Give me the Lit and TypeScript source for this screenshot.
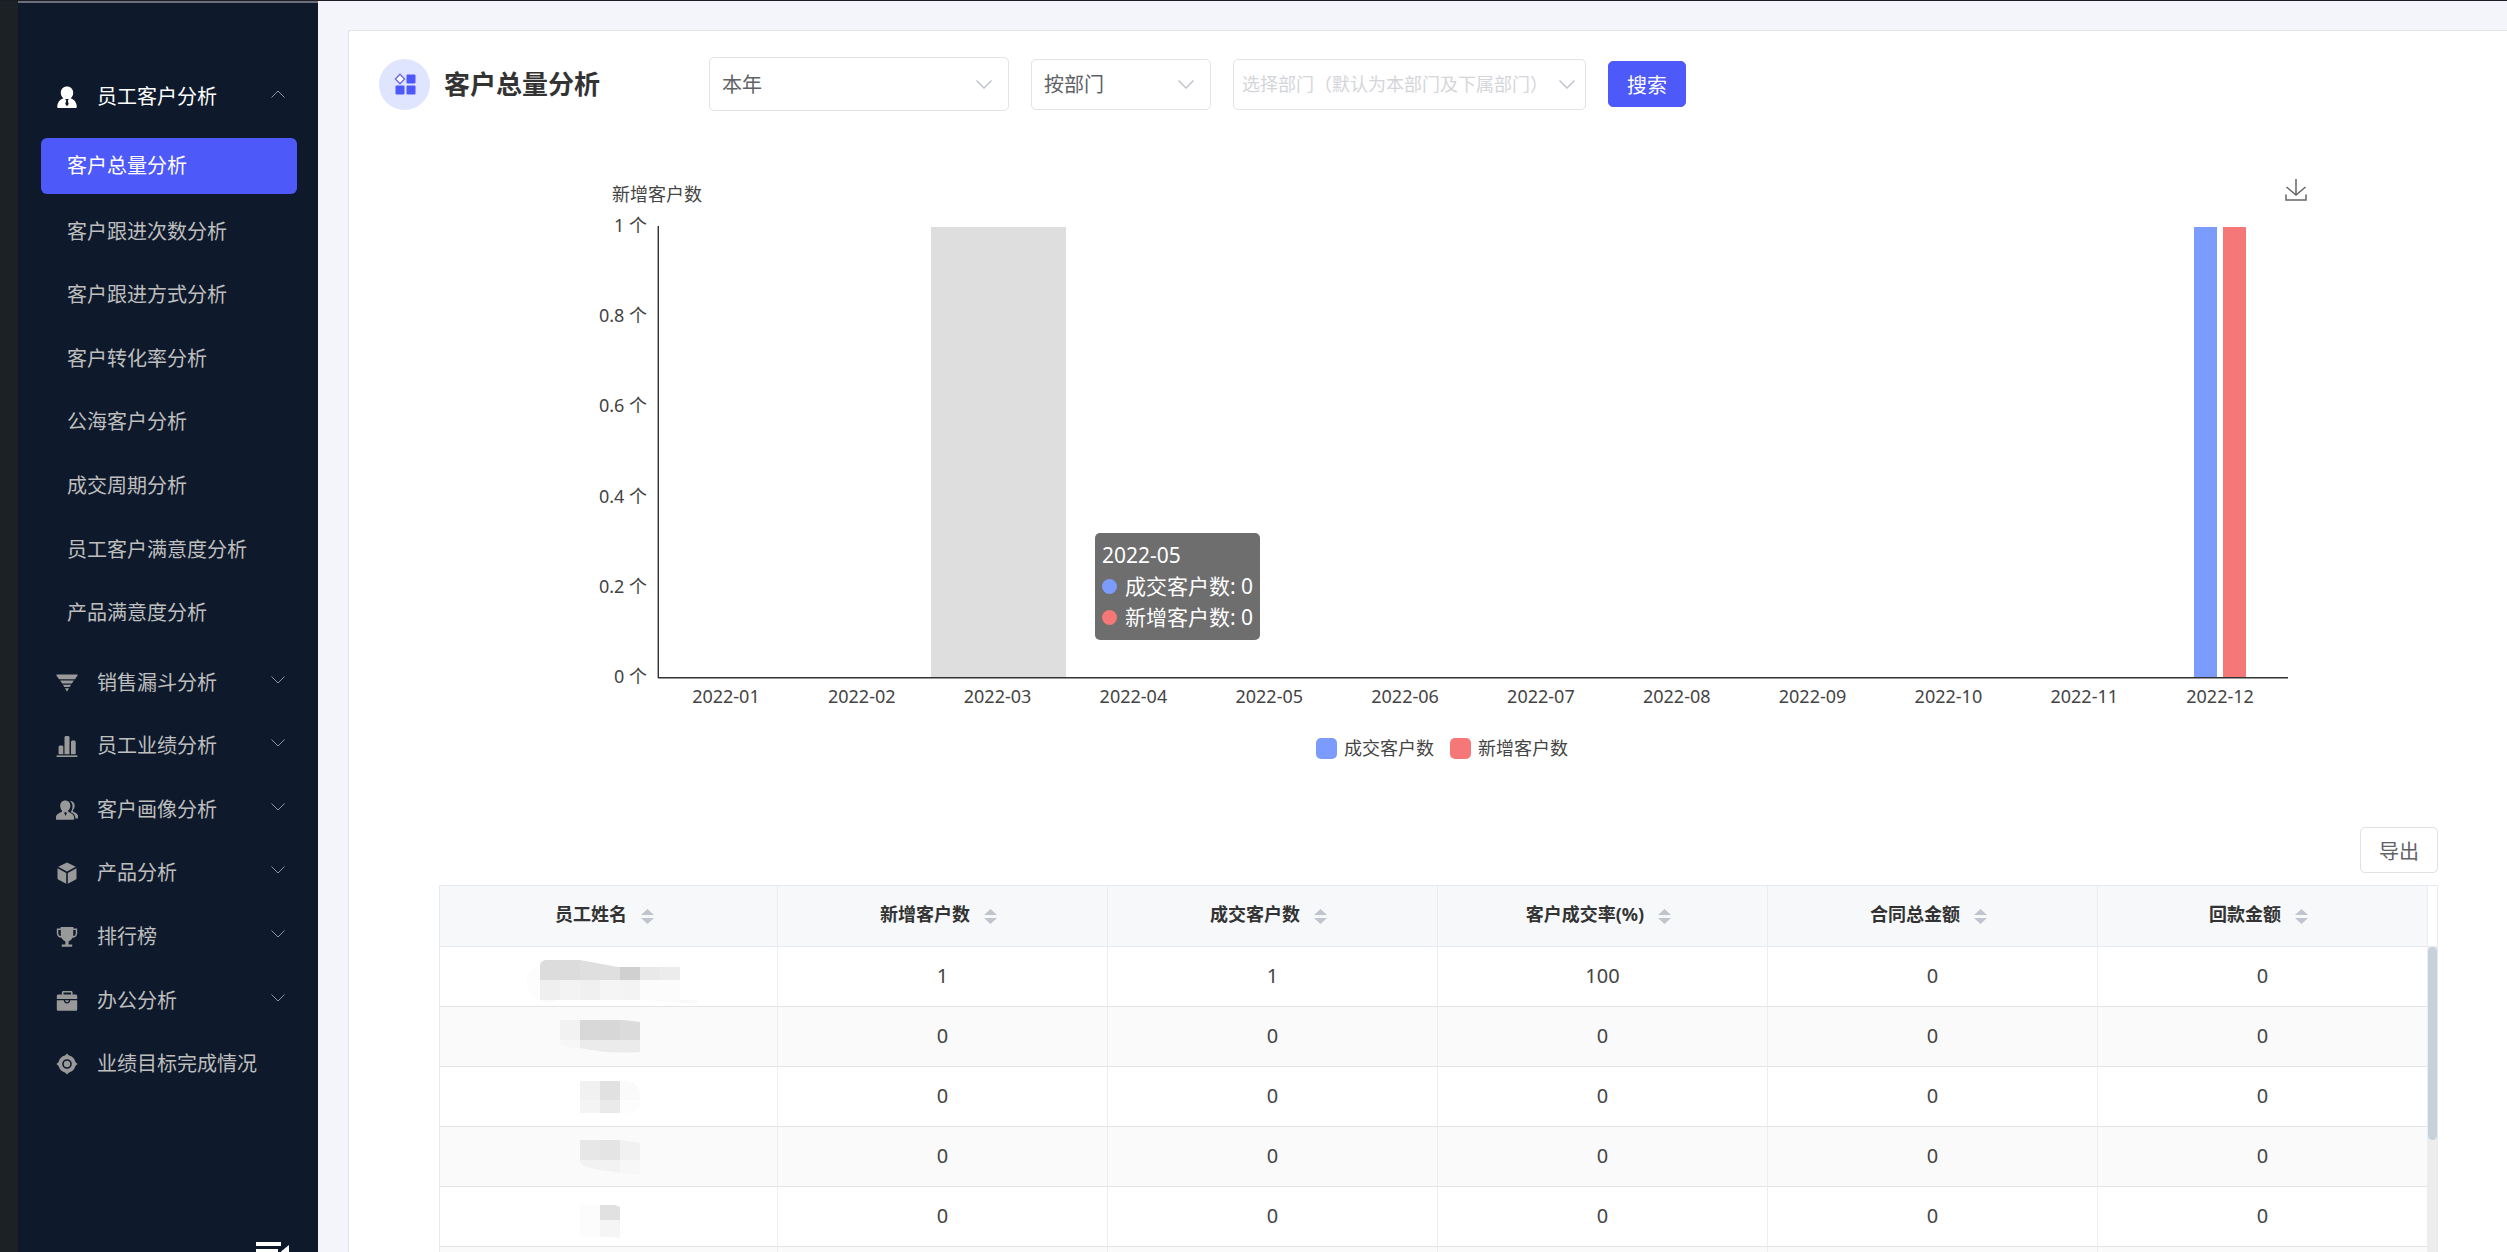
import { LitElement, html, svg, css, nothing } from "lit";
import { customElement, property, state } from "lit/decorators.js";
import { classMap } from "lit/directives/class-map.js";

const icons: Record<string, unknown> = {
  person: svg`<path d="M11 0.5c3.600 0 6.200 2.700 6.200 6.300 0 2.300-1 4.300-2.600 5.400 3.700 1.300 6 4.200 6.200 8.300 0 1.200-.5 1.700-1.600 1.700H2.800c-1.100 0-1.600-.5-1.600-1.700 .2-4.100 2.500-7 6.200-8.300C5.800 11.100 4.800 9.100 4.800 6.800 4.800 3.200 7.400.5 11 .5z"/><path class="cut" d="M9.200 13h3.600l-1 1.700.9 3.300L11 20.200 9.300 18l.9-3.300z"/>`,
  funnel: svg`<path d="M.5 2.400h21v1.400l-2.600 3.400H3.100L.5 3.800zM4.200 8.400h13.600l-1.900 3.200H6.100zM6.900 12.800h8.200l-1.400 2.300H8.300zM9 16.300h4L11 19.800z"/>`,
  bars: svg`<path d="M2.600 11.500l1-1h2.700l1 1v7.700H2.600zM8.500 2l1-1h3l1 1v17.200h-5zM15 6.500l1-1h2.700l1 1v12.700H15z"/><path d="M.6 20.400h20.800v1.600H.6z"/>`,
  people: svg`<path d="M9.300 1.500c3 0 5 2.200 5 5.200 0 2-.8 3.800-2.100 4.900v1.200c2 1 4.800 2 5.600 4.200.3 1 .4 2 .4 2.700 0 .7-.4 1-1 1H.8c-.6 0-1-.3-1-1 0-.7.1-1.700.4-2.700.8-2.200 3.600-3.200 5.800-4.200v-1.200C4.900 10.500 4.200 8.700 4.200 6.700c0-3 2.100-5.200 5.100-5.200z"/><path d="M13.800 2c2.800-.1 4.900 1.900 4.900 4.700 0 1.800-.7 3.300-1.800 4.300v1.500c2 .9 4.200 1.800 5 3.900.3 1 .4 1.500.4 2.200 0 .6-.3.900-.9.900h-1.900c-.3-3.600-2.200-5.100-5-6.400 1.400-1.600 2-3.700 2-6.200 0-1.900-.9-3.700-2.700-4.900z"/><path class="cut" d="M8.200 14l1.300-1.200 1.300 1.200-1.100 3z"/>`,
  cube: svg`<path d="M11 .5l8.800 4.300L11 9.500 2.200 4.800zM1.500 6.200l8.700 4.700V21.800l-8-4.300c-.5-.3-.7-.6-.7-1.200zM20.500 6.200l-8.700 4.700V21.800l8-4.300c.5-.3.7-.6.700-1.200z"/>`,
  trophy: svg`<path fill-rule="evenodd" d="M4.600 1h12.800v1.600h3.800v4.600c0 2.800-1.900 4.300-4.700 4.600-.9 1.700-2.200 3-3.900 3.700v3h3.600v2.200H5.800v-2.200h3.600v-3c-1.700-.7-3-2-3.900-3.700C2.700 11.500.8 10 .8 7.200V2.600h3.800zM2.300 4v3.200c0 1.600.8 2.500 2.500 2.900V4zm17.400 0h-2.500v6.100c1.700-.4 2.500-1.300 2.500-2.900z"/>`,
  case: svg`<path fill-rule="evenodd" d="M7.500 1h7.500c1 0 1.600.6 1.600 1.600v2h3c1 0 1.600.6 1.600 1.600V9H.8V6.200c0-1 .6-1.600 1.600-1.600h3.500v-2C5.900 1.600 6.500 1 7.500 1zm0 1.600v2H15v-2z"/><path d="M.8 10.300h7c0 2 1.200 3.200 3.200 3.200s3.200-1.200 3.200-3.200h7v9c0 1-.5 1.500-1.500 1.500H2.300c-1 0-1.500-.5-1.500-1.500z"/><path d="M9.200 10.300h3.600c0 1.200-.7 1.900-1.800 1.900s-1.800-.7-1.800-1.900z"/>`,
  target: svg`<path fill-rule="evenodd" d="M11 .5l2 2.100c3.300.8 5.600 3.100 6.400 6.400l2.100 2-2.100 2c-.8 3.300-3.100 5.600-6.400 6.400l-2 2.100-2-2.100C5.700 18.600 3.400 16.300 2.600 13L.5 11l2.100-2C3.400 5.700 5.700 3.400 9 2.600zM11 6.200a4.800 4.800 0 100 9.600 4.800 4.800 0 000-9.600z"/><circle cx="11" cy="11" r="3.200"/>`,
};

const subItems = [
  "客户跟进次数分析",
  "客户跟进方式分析",
  "客户转化率分析",
  "公海客户分析",
  "成交周期分析",
  "员工客户满意度分析",
  "产品满意度分析",
];

const groups = [
  { icon: "funnel", label: "销售漏斗分析", open: true },
  { icon: "bars", label: "员工业绩分析", open: true },
  { icon: "people", label: "客户画像分析", open: true },
  { icon: "cube", label: "产品分析", open: true },
  { icon: "trophy", label: "排行榜", open: true },
  { icon: "case", label: "办公分析", open: true },
  { icon: "target", label: "业绩目标完成情况", open: false },
];

@customElement("side-menu")
class SideMenu extends LitElement {
  static styles = css`
    :host {
      display: flex;
      flex-direction: column;
      box-sizing: border-box;
      width: 300px;
      height: 100%;
      background: #0e1a2c;
      border-top: 2px solid #6a6f79;
      padding-top: 62px;
      color: #bebebe;
    }
    a,
    button {
      font: inherit;
      color: inherit;
      text-decoration: none;
      background: none;
      border: 0;
      padding: 0;
      text-align: left;
      white-space: nowrap;
      cursor: pointer;
    }
    .group {
      display: grid;
      grid-template-columns: 22px minmax(0, 1fr) 14px;
      column-gap: 19px;
      align-items: center;
      width: 100%;
      box-sizing: border-box;
      padding: 0 33px 0 38px;
      font-size: 20px;
      line-height: 28px;
    }
    .group.current {
      height: 64px;
      color: #fff;
      margin-bottom: 9px;
      flex: none;
    }
    .icon {
      width: 22px;
      height: 22px;
      fill: #999;
    }
    .current .icon {
      fill: #fff;
    }
    .cut {
      fill: #0e1a2c;
    }
    .chevron {
      width: 14px;
      height: 8px;
      fill: none;
      stroke: #909399;
      margin-bottom: 6px;
    }
    .sub {
      display: flex;
      align-items: center;
      padding-left: 49px;
      font-size: 20px;
      line-height: 28px;
    }
    .sub.active {
      flex: none;
      height: 56px;
      margin: 0 21px 6px 23px;
      padding-left: 26px;
      border-radius: 6px;
      background: #4e59f9;
      color: #fff;
    }
    .list {
      display: grid;
      grid-template-columns: minmax(0, 1fr);
      grid-auto-rows: 1fr;
      height: 445px;
      flex: none;
      margin-bottom: 6px;
    }
    .fold {
      margin: auto 29px 0 auto;
      width: 33px;
      height: 10px;
      flex: none;
      overflow: hidden;
    }
    .fold svg {
      display: block;
      width: 33px;
      height: 24px;
      fill: #fff;
    }
  `;

  private icon(name: string) {
    return html`<svg class="icon" viewBox="0 0 22 22" aria-hidden="true">${icons[name]}</svg>`;
  }

  render() {
    return html`
      <button class="group current" aria-expanded="true">
        ${this.icon("person")}<span>员工客户分析</span>
        <svg class="chevron" viewBox="0 0 14 8"><path d="M.5 7.500L7 1l6.500 6.500" /></svg>
      </button>
      <a class="sub active" href="#total">客户总量分析</a>
      <div class="list">
        ${subItems.map((t) => html`<a class="sub" href="#sub">${t}</a>`)}
      </div>
      <div class="list">
        ${groups.map(
          (g) => html`<button class="group">
            ${this.icon(g.icon)}<span>${g.label}</span>
            ${g.open
              ? html`<svg class="chevron" viewBox="0 0 14 8"><path d="M.5 .5L7 7 13.500 .5" /></svg>`
              : nothing}
          </button>`
        )}
      </div>
      <button class="fold" aria-label="收起菜单">
        <svg viewBox="0 0 33 24">
          <path d="M0 0h25v4H0zM0 7h22v4H0zM0 14h25v4H0zM33 3v13l-8-6.500z" />
        </svg>
      </button>
    `;
  }
}

const months = Array.from({ length: 12 }, (_, i) => `2022-${String(i + 1).padStart(2, "0")}`);
const deals = months.map((_, i) => (i === 11 ? 1 : 0));
const added = months.map((_, i) => (i === 11 ? 1 : 0));

@customElement("customer-chart")
class CustomerChart extends LitElement {
  @property({ type: Number }) hovered = 2;

  static styles = css`
    :host {
      display: block;
      font-size: 18px;
      line-height: 20px;
      color: #444;
    }
    .top {
      display: flex;
      justify-content: space-between;
      align-items: flex-start;
      padding-left: 15px;
      line-height: 32px;
      height: 32px;
      margin-bottom: 6px;
    }
    .download {
      border: 0;
      background: none;
      padding: 1px 0 0;
      line-height: 0;
      cursor: pointer;
    }
    .download svg {
      width: 22px;
      height: 24px;
      fill: none;
      stroke: #666;
      stroke-width: 1.500;
    }
    .body {
      display: grid;
      grid-template-columns: 50px 1fr;
      column-gap: 11px;
      padding-right: 19px;
    }
    .ticks {
      display: flex;
      flex-direction: column;
      justify-content: space-between;
      text-align: right;
      height: 471px;
      margin-top: -1px;
      white-space: nowrap;
    }
    .plot {
      position: relative;
      display: grid;
      grid-template-columns: repeat(12, 1fr);
      margin: 10px 0 8px;
      border-left: 1px solid #333;
      border-bottom: 1px solid #333;
      box-shadow: -1px 0 #aaa, 0 1px #999;
      padding-top: 1px;
    }
    .slot {
      display: flex;
      justify-content: center;
      align-items: flex-end;
      gap: 6px;
    }
    .slot.hovered {
      background: #dedede;
    }
    .bar {
      width: 23px;
    }
    .deal {
      background: #7b9cfc;
    }
    .new {
      background: #f57777;
    }
    .months {
      grid-column: 2;
      display: grid;
      grid-template-columns: repeat(12, 1fr);
      text-align: center;
    }
    .tip {
      position: absolute;
      left: 436px;
      top: 307px;
      box-sizing: border-box;
      padding: 7px;
      border-radius: 5px;
      background: rgba(80, 80, 80, 0.83);
      color: #fff;
      font-size: 21px;
      line-height: 31px;
      white-space: nowrap;
    }
    .tip-row {
      display: flex;
      align-items: center;
      gap: 8px;
    }
    .dot {
      width: 15px;
      height: 15px;
      border-radius: 50%;
    }
    .legend {
      display: flex;
      justify-content: center;
      gap: 16px;
      padding-right: 20px;
      margin-top: 31px;
      line-height: 22px;
    }
    .key {
      display: flex;
      align-items: center;
      gap: 7px;
    }
    .swatch {
      width: 21px;
      height: 21px;
      border-radius: 5px;
    }
  `;

  render() {
    return html`
      <div class="top">
        <span>新增客户数</span>
        <button class="download" aria-label="保存为图片">
          <svg viewBox="0 0 22 24"><path d="M11 0v16M1.500 8l9.500 8 9.500-8M1 15.500v5.500h20v-5.500" /></svg>
        </button>
      </div>
      <div class="body">
        <div class="ticks">
          ${["1", "0.8", "0.6", "0.4", "0.2", "0"].map((t) => html`<span>${t} 个</span>`)}
        </div>
        <div class="plot">
          ${months.map(
            (_, i) => html`<div class=${classMap({ slot: true, hovered: i === this.hovered })}>
              ${deals[i] ? html`<div class="bar deal" style="height:${deals[i] * 100}%"></div>` : nothing}
              ${added[i] ? html`<div class="bar new" style="height:${added[i] * 100}%"></div>` : nothing}
            </div>`
          )}
          <div class="tip" role="tooltip">
            <div>2022-05</div>
            <div class="tip-row"><span class="dot deal"></span><span>成交客户数: 0</span></div>
            <div class="tip-row"><span class="dot new"></span><span>新增客户数: 0</span></div>
          </div>
        </div>
        <div class="months">${months.map((m) => html`<span>${m}</span>`)}</div>
      </div>
      <div class="legend">
        <span class="key"><span class="swatch deal"></span>成交客户数</span>
        <span class="key"><span class="swatch new"></span>新增客户数</span>
      </div>
    `;
  }
}

const columns = ["员工姓名", "新增客户数", "成交客户数", "客户成交率(%)", "合同总金额", "回款金额"];

// Mosaic blocks that hide each employee's name: [x, y, width, height, colour].
type Block = [number, number, number, number, string];
const masks: { path: string; blocks: Block[] }[] = [
  {
    path: "M8 33Q12 20 22 18Q23 13 29 13H62L100 20H162V53H190L180 57L130 53H40L30 56L22 53Q10 48 8 33z",
    blocks: [
      [8, 20, 14, 33, "#fdfdfd"],
      [22, 13, 40, 20, "#dcdcdc"],
      [62, 13, 40, 20, "#dfdfdf"],
      [102, 20, 20, 13, "#d0d0d0"],
      [122, 20, 20, 13, "#e9e9e9"],
      [142, 20, 20, 13, "#ececec"],
      [22, 33, 20, 20, "#efefef"],
      [42, 33, 20, 20, "#f3f3f3"],
      [62, 33, 20, 20, "#f0f0f0"],
      [82, 33, 20, 20, "#f5f5f5"],
      [102, 33, 20, 20, "#f3f3f3"],
      [122, 33, 40, 20, "#fcfcfc"],
      [22, 53, 168, 5, "#fafafa"],
    ],
  },
  {
    path: "M42 13H105L122 15V45Q90 47 62 41Q42 41 42 34z",
    blocks: [
      [42, 13, 20, 20, "#f2f2f2"],
      [62, 13, 20, 20, "#d8d8d8"],
      [82, 13, 20, 20, "#d7d7d7"],
      [102, 13, 20, 20, "#dbdbdb"],
      [42, 33, 20, 10, "#f7f7f7"],
      [62, 33, 60, 14, "#ebebeb"],
    ],
  },
  {
    path: "M62 14H108Q122 16 122 28V38Q120 46 112 46H62z",
    blocks: [
      [62, 14, 20, 19, "#f1f1f1"],
      [82, 14, 20, 19, "#e1e1e1"],
      [102, 14, 20, 19, "#fafafa"],
      [62, 33, 20, 13, "#f4f4f4"],
      [82, 33, 20, 13, "#eaeaea"],
      [102, 33, 20, 13, "#fdfdfd"],
    ],
  },
  {
    path: "M62 13H102L122 16V48L82 43Q62 40 62 34z",
    blocks: [
      [62, 13, 20, 20, "#e7e7e7"],
      [82, 13, 20, 20, "#e4e4e4"],
      [102, 13, 20, 20, "#f1f1f1"],
      [62, 33, 40, 14, "#f2f2f2"],
      [102, 33, 20, 15, "#f7f7f7"],
    ],
  },
  {
    path: "M62 18H97L102 20V51L92 50H62z",
    blocks: [
      [62, 18, 20, 32, "#fcfcfc"],
      [82, 18, 20, 15, "#e1e1e1"],
      [82, 33, 20, 18, "#f5f5f5"],
    ],
  },
  { path: "M0 0z", blocks: [] },
];

const rows = [
  ["1", "1", "100", "0", "0"],
  ["0", "0", "0", "0", "0"],
  ["0", "0", "0", "0", "0"],
  ["0", "0", "0", "0", "0"],
  ["0", "0", "0", "0", "0"],
  ["", "", "", "", ""],
];

@customElement("staff-table")
class StaffTable extends LitElement {
  static styles = css`
    :host {
      display: flex;
      border: 1px solid #e8eaf1;
    }
    table {
      flex: 1;
      table-layout: fixed;
      border-collapse: separate;
      border-spacing: 0;
      width: 100%;
      color: #444;
    }
    th,
    td {
      box-sizing: border-box;
      border-right: 1px solid #ebedf3;
      border-bottom: 1px solid #e3e4e6;
      padding: 0;
      height: 60px;
      text-align: center;
      font-size: 20px;
      line-height: 28px;
    }
    .value {
      padding-bottom: 2px;
    }
    .name-col {
      width: 17%;
    }
    th {
      height: 61px;
      border-bottom-color: #e8eaf1;
      background: #f6f8fa;
    }
    tbody tr:nth-child(even) td {
      background: #fafafa;
    }
    .sort {
      display: inline-flex;
      align-items: center;
      gap: 14px;
      border: 0;
      padding: 0 8px 4px 0;
      background: none;
      font: inherit;
      font-size: 18px;
      font-weight: 700;
      color: #333;
      cursor: pointer;
    }
    .arrows {
      width: 13px;
      height: 15px;
      fill: #c0c4cc;
      margin-top: 4px;
    }
    .mask {
      display: block;
      width: 180px;
      height: 59px;
      margin: 0 auto;
    }
    .gutter {
      display: flex;
      flex-direction: column;
      width: 9px;
      background: #ededed;
    }
    .corner {
      height: 60px;
      background: #fff;
      border-bottom: 1px solid #e8eaf1;
    }
    .thumb {
      height: 193px;
      border-radius: 5px;
      background: #c7d1da;
    }
  `;

  render() {
    return html`
      <table>
        <thead>
          <tr>
            ${columns.map(
              (c, i) => html`<th class=${classMap({ "name-col": i === 0 })} scope="col">
                <button class="sort">
                  ${c}<svg class="arrows" viewBox="0 0 13 15"><path d="M0 6l6.500-6L13 6zM0 9h13l-6.500 6z" /></svg>
                </button>
              </th>`
            )}
          </tr>
        </thead>
        <tbody>
          ${rows.map(
            (r, i) => html`<tr>
              <td>
                <svg class="mask" viewBox="0 0 180 59" role="img" aria-label="姓名已隐藏">
                  <clipPath id="m${i}"><path d=${masks[i].path} /></clipPath>
                  <g clip-path="url(#m${i})">
                    ${masks[i].blocks.map(
                      ([x, y, w, h, c]) => svg`<rect x=${x} y=${y} width=${w} height=${h} fill=${c} />`
                    )}
                  </g>
                </svg>
              </td>
              ${r.map((v) => html`<td class="value">${v}</td>`)}
            </tr>`
          )}
        </tbody>
      </table>
      <div class="gutter">
        <div class="corner"></div>
        <div class="thumb"></div>
      </div>
    `;
  }
}

@customElement("app-root")
class AppRoot extends LitElement {
  @state() private period = "本年";

  static styles = css`
    :host {
      display: block;
      font-family: "Noto Sans", "Noto Sans CJK SC", sans-serif;
      font-size: 20px;
      font-weight: 400;
    }
    .page {
      display: flex;
      box-sizing: border-box;
      height: 100vh;
      overflow: hidden;
      border-top: 1px solid #1b1c26;
      background: #f4f5fa;
    }
    .rail {
      flex: 0 0 18px;
      background: #1c2126;
    }
    side-menu {
      flex: none;
    }
    .main {
      flex: 1;
      min-width: 0;
      padding: 29px 0 0 30px;
    }
    .card {
      border: 1px solid #e3e4e7;
      border-right: 0;
      border-top-left-radius: 3px;
      background: #fff;
      padding: 26px 69px 0 0;
    }
    .head {
      display: flex;
      align-items: center;
      height: 54px;
      padding-left: 30px;
    }
    .badge {
      display: grid;
      place-items: center;
      width: 51px;
      height: 51px;
      border-radius: 50%;
      background: #e0e5ff;
    }
    .badge svg {
      width: 22px;
      height: 22px;
    }
    h1 {
      margin: 0 109px 0 14px;
      font-size: 26px;
      line-height: 36px;
      font-weight: 700;
      color: #333;
    }
    .pick {
      display: grid;
      align-items: center;
      margin-right: 22px;
      height: 51px;
      width: 180px;
    }
    .pick.period {
      width: 300px;
      height: 54px;
    }
    .pick.dept {
      width: 353px;
    }
    .pick select {
      grid-area: 1 / 1;
      appearance: none;
      width: 100%;
      height: 100%;
      border: 1px solid #e2e3e6;
      border-radius: 5px;
      background: #fff;
      padding: 0 40px 0 12px;
      font: inherit;
      font-size: 20px;
      color: #606266;
    }
    .pick.dept select {
      padding: 0 30px 0 8px;
      font-size: 18px;
      color: #d4d5d9;
    }
    .pick svg {
      grid-area: 1 / 1;
      justify-self: end;
      width: 16px;
      height: 9px;
      margin-right: 17px;
      fill: none;
      stroke: #c0c4cc;
      stroke-width: 1.500;
      pointer-events: none;
    }
    .pick.dept svg {
      margin-right: 11px;
    }
    .btn {
      box-sizing: border-box;
      width: 78px;
      height: 46px;
      padding: 0;
      border: 1px solid #e0e1e4;
      border-radius: 5px;
      background: #fff;
      font: inherit;
      font-size: 20px;
      color: #606266;
      cursor: pointer;
    }
    .btn.primary {
      border-color: #4e59f9;
      background: #4e59f9;
      color: #fff;
    }
    customer-chart {
      margin: 67px 131px 68px 248px;
    }
    .actions {
      display: flex;
      justify-content: flex-end;
      margin-bottom: 12px;
    }
    staff-table {
      margin-left: 90px;
    }
  `;

  private chevron() {
    return html`<svg viewBox="0 0 16 9" aria-hidden="true"><path d="M.5 .5L8 8 15.500 .5" /></svg>`;
  }

  render() {
    return html`
      <div class="page">
        <div class="rail"></div>
        <side-menu></side-menu>
        <main class="main">
          <section class="card">
            <header class="head">
              <span class="badge">
                <svg viewBox="0 0 22 22" fill="#4e59f9">
                  <path d="M6 1.200l4.600 4.800L6 10.800 1.400 6z" fill="#fff" stroke="#6a63f3" stroke-width="1.300" />
                  <rect x="12.500" y="1.500" width="9" height="9" rx="1" />
                  <rect x="1.500" y="12.500" width="9" height="9" rx="1" />
                  <rect x="12.500" y="12.500" width="9" height="9" rx="1" />
                </svg>
              </span>
              <h1>客户总量分析</h1>
              <label class="pick period">
                <select aria-label="时间范围"><option>${this.period}</option></select>${this.chevron()}
              </label>
              <label class="pick">
                <select aria-label="统计维度"><option>按部门</option></select>${this.chevron()}
              </label>
              <label class="pick dept">
                <select aria-label="选择部门"><option>选择部门（默认为本部门及下属部门）</option></select>${this.chevron()}
              </label>
              <button class="btn primary">搜索</button>
            </header>
            <customer-chart></customer-chart>
            <div class="actions"><button class="btn">导出</button></div>
            <staff-table></staff-table>
          </section>
        </main>
      </div>
    `;
  }
}
